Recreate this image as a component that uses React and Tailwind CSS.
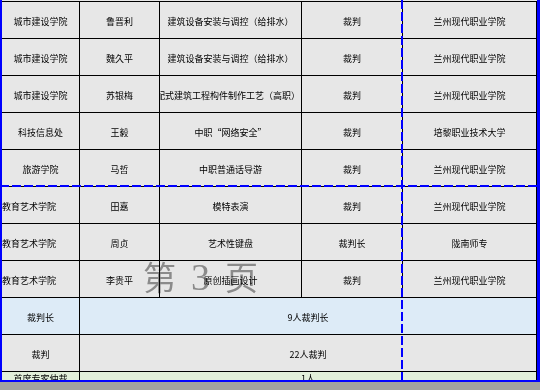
import React from 'react';

const rows = [
  ['城市建设学院', '鲁晋利', '建筑设备安装与调控（给排水）', '裁判', '兰州现代职业学院'],
  ['城市建设学院', '魏久平', '建筑设备安装与调控（给排水）', '裁判', '兰州现代职业学院'],
  ['城市建设学院', '苏银梅', '装配式建筑工程构件制作工艺（高职）', '裁判', '兰州现代职业学院'],
  ['科技信息处', '王毅', '中职“网络安全”', '裁判', '培黎职业技术大学'],
  ['旅游学院', '马哲', '中职普通话导游', '裁判', '兰州现代职业学院'],
  ['教育艺术学院', '田嘉', '模特表演', '裁判', '兰州现代职业学院'],
  ['教育艺术学院', '周贞', '艺术性键盘', '裁判长', '陇南师专'],
  ['教育艺术学院', '李贵平', '原创插画设计', '裁判', '兰州现代职业学院'],
];

function Cell({ children, className = 'justify-center' }) {
  return (
    <div className={`flex items-center pt-[3px] border-r border-black overflow-hidden whitespace-nowrap ${className}`}>
      {children}
    </div>
  );
}

export default function App() {
  return (
    <div
      className="relative w-[540px] h-[390px] bg-[#a0a0a0] overflow-hidden text-[9px] leading-none text-black"
      style={{ fontFamily: '"Noto Sans CJK SC", "Liberation Sans", sans-serif' }}
    >
      {/* sheet */}
      <div className="h-[382px] bg-[#e7e7e7] border-l-2 border-r-[3px] border-b-2 border-[#0000ff] overflow-hidden">
        <div className="h-[1px]" />
        {rows.map((r, i) => (
          <div key={i} className="grid grid-cols-[78px_80px_142px_101px_134px] h-[37px] border-t border-black">
            <Cell className={r[0] === '教育艺术学院' ? 'justify-start' : 'justify-center'}>{r[0]}</Cell>
            <Cell>{r[1]}</Cell>
            <Cell className={i === 2 ? 'justify-end pr-[1px]' : 'justify-center'}>{r[2]}</Cell>
            <Cell>{r[3]}</Cell>
            <Cell>{r[4]}</Cell>
          </div>
        ))}
        <div className="grid grid-cols-[78px_457px] h-[37px] border-t border-black bg-[#ddebf7]">
          <Cell>裁判长</Cell>
          <Cell>9人裁判长</Cell>
        </div>
        <div className="grid grid-cols-[78px_457px] h-[37px] border-t border-black">
          <Cell>裁判</Cell>
          <Cell>22人裁判</Cell>
        </div>
        <div className="grid grid-cols-[78px_457px] h-[24px] border-t border-black bg-[#e2efda]">
          <div className="flex justify-center pt-[2px] border-r border-black">首席专家仲裁</div>
          <div className="flex justify-center pt-[2px] border-r border-black">1人</div>
        </div>
      </div>

      {/* page watermark */}
      <div className="absolute left-[143px] top-[258px] flex items-baseline gap-[15px] text-[#9a9a9a] mix-blend-multiply pointer-events-none">
        <span className="text-[33px]">第</span>
        <span className="text-[38px]" style={{ fontFamily: '"Liberation Serif", serif' }}>3</span>
        <span className="text-[33px]">页</span>
      </div>

      {/* page break lines */}
      <div className="absolute left-0 top-[185px] w-[537px] h-[2px] bg-[repeating-linear-gradient(90deg,#0000ff_0_9px,transparent_9px_12px)]" />
      <div className="absolute left-[401px] top-0 w-[2px] h-[380px] bg-[repeating-linear-gradient(180deg,#0000ff_0_9px,transparent_9px_12px)]" />
    </div>
  );
}
